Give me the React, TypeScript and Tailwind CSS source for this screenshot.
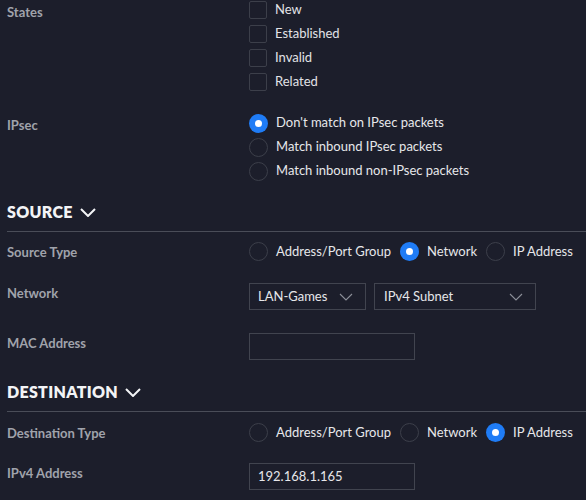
import React from "react";

const Check = ({ label }: { label: string }) => (
  <div className="flex h-5 items-center gap-2">
    <span className="box-border h-[18px] w-[18px] rounded-[2px] border border-[#3c3f4a]" />
    <span className="text-[13px] text-[#e2e3e7]">{label}</span>
  </div>
);

const Radio = ({ label, on }: { label: string; on?: boolean }) => (
  <div className="flex h-5 items-center gap-2">
    {on ? (
      <span className="flex h-[19px] w-[19px] items-center justify-center rounded-full bg-[#1f7cf6]">
        <span className="h-[7px] w-[7px] rounded-full bg-white" />
      </span>
    ) : (
      <span className="box-border h-[19px] w-[19px] rounded-full border-[1.5px] border-[#3c3f4a]" />
    )}
    <span className="text-[13px] text-[#e6e7ea]">{label}</span>
  </div>
);

const Label = ({ children, pt }: { children: React.ReactNode; pt: string }) => (
  <div className={`w-[242px] shrink-0 text-[13px] leading-5 font-bold text-[#a0a3ab] ${pt}`}>{children}</div>
);

const Chevron = () => (
  <svg width="14" height="8" viewBox="0 0 14 8" fill="none">
    <path d="M1 1l6 6 6-6" stroke="#8c8f98" strokeWidth="1.1" />
  </svg>
);

const Header = ({ title, mt }: { title: string; mt: string }) => (
  <div className={`${mt} border-b border-[#4a4d58] pb-[7px]`}>
    <div className="flex h-6 items-center gap-[7px] text-[16px] font-extrabold tracking-[0.3px] text-[#f3f4f6]">
      {title}
      <svg width="16" height="9" viewBox="0 0 16 9" fill="none">
        <path d="M1 1l7 7 7-7" stroke="#f3f4f6" strokeWidth="2" />
      </svg>
    </div>
  </div>
);

const Box = ({ w, children }: { w: string; children?: React.ReactNode }) => (
  <div className={`box-border flex h-[27px] items-center border border-[#41444f] px-2 text-[13px] text-[#e6e7ea] ${w}`}>
    {children}
  </div>
);

export default function App() {
  return (
    <div
      className="h-[500px] w-[586px] overflow-hidden bg-[#1c1e2b] pl-[7px]"
      style={{ fontFamily: "Lato, 'Noto Sans', sans-serif" }}
    >
      <div className="flex">
        <Label pt="pt-[2px]">States</Label>
        <div className="flex flex-col gap-1">
          <Check label="New" />
          <Check label="Established" />
          <Check label="Invalid" />
          <Check label="Related" />
        </div>
      </div>

      <div className="mt-[21px] flex">
        <Label pt="pt-[2px]">IPsec</Label>
        <div className="flex flex-col gap-1">
          <Radio label="Don't match on IPsec packets" on />
          <Radio label="Match inbound IPsec packets" />
          <Radio label="Match inbound non-IPsec packets" />
        </div>
      </div>

      <Header title="SOURCE" mt="mt-[19px]" />

      <div className="mt-[9px] flex">
        <Label pt="pt-[1px]">Source Type</Label>
        <div className="flex items-center gap-[9px]">
          <Radio label="Address/Port Group" />
          <Radio label="Network" on />
          <Radio label="IP Address" />
        </div>
      </div>

      <div className="mt-[21px] flex">
        <Label pt="pt-0">Network</Label>
        <div className="flex gap-2">
          <Box w="w-[117px] justify-between pr-[12px]">
            <span>LAN-Games</span>
            <Chevron />
          </Box>
          <Box w="w-[162px] justify-between pl-[9px] pr-[12px]">
            <span>IPv4 Subnet</span>
            <Chevron />
          </Box>
        </div>
      </div>

      <div className="mt-[23px] flex">
        <Label pt="pt-0">MAC Address</Label>
        <Box w="w-[166px]" />
      </div>

      <Header title="DESTINATION" mt="mt-[20px]" />

      <div className="mt-[10px] flex">
        <Label pt="pt-[1px]">Destination Type</Label>
        <div className="flex items-center gap-[9px]">
          <Radio label="Address/Port Group" />
          <Radio label="Network" />
          <Radio label="IP Address" on />
        </div>
      </div>

      <div className="mt-[20px] flex">
        <Label pt="pt-0">IPv4 Address</Label>
        <Box w="w-[166px]">192.168.1.165</Box>
      </div>
    </div>
  );
}
